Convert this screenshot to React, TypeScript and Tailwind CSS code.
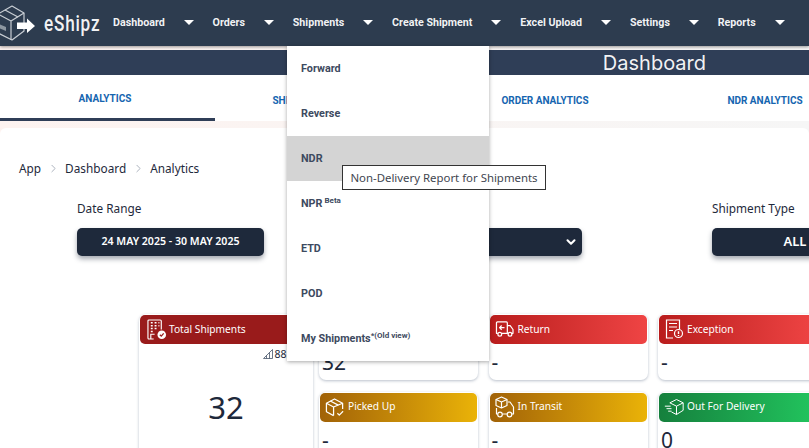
import { ChevronRight, ChevronDown } from 'lucide-react';
import type { ReactNode } from 'react';

const navItems = ['Dashboard', 'Orders', 'Shipments', 'Create Shipment', 'Excel Upload', 'Settings', 'Reports'];
const tabs = ['ANALYTICS', 'SHIPMENT ANALYTICS', 'ORDER ANALYTICS', 'NDR ANALYTICS'];
const menuItems: { label: string; sup?: string }[] = [
  { label: 'Forward' },
  { label: 'Reverse' },
  { label: 'NDR' },
  { label: 'NPR', sup: ' Beta' },
  { label: 'ETD' },
  { label: 'POD' },
  { label: 'My Shipments', sup: '*(Old view)' },
];

function Logo() {
  return (
    <svg width="44" height="46" viewBox="0 0 44 46" fill="none" className="shrink-0">
      <g stroke="#c9ced4" strokeWidth="1.2" strokeLinejoin="round">
        <path d="M-2 14 L12 6 L24 13 L24 31 L12 40 L-2 33 Z" />
        <path d="M-2 14 L11 21 L24 13 M11 21 V40" />
        <path d="M5 10 L18 17" />
      </g>
      <path d="M-1 24 L6 27 V31 L-1 28 Z" fill="#8c96a0" />
      <path d="M17 22.5 H27 V18.5 L35 26 L27 33 V29 H17 Z" fill="#fff" />
    </svg>
  );
}

function IconBuilding() {
  return (
    <svg width="20" height="21" viewBox="0 0 21 22" fill="none" stroke="#fff" strokeWidth="1.2">
      <path d="M7 21 H2 a1 1 0 0 1 -1 -1 V2 a1 1 0 0 1 1 -1 H14 a1 1 0 0 1 1 1 V11" />
      <path d="M4 4h2M8 4h2M12 4h1M4 7h2M8 7h2M12 7h1M4 10h2M8 10h2M4 13h2" strokeWidth="1.6" />
      <path d="M4 21 V16 H8" />
      <circle cx="15.5" cy="16.5" r="4.5" fill="#fff" stroke="none" />
      <path d="M13.5 16.5 L15 18 L17.5 15" stroke="#991b1b" strokeWidth="1.3" />
    </svg>
  );
}

function IconReturn() {
  return (
    <svg width="19" height="17" viewBox="0 0 20 18" fill="none" stroke="#fff" strokeWidth="1.3" strokeLinejoin="round">
      <path d="M3 13 H1.5 V2 a1 1 0 0 1 1 -1 H12 a1 1 0 0 1 1 1 V13 H7" />
      <path d="M13 5 H16 L19 9 V13 H17.5 M13 13 H14" />
      <circle cx="5" cy="14" r="2" />
      <circle cx="15.8" cy="14" r="2" />
      <path d="M10 7 H5 M7 4.8 L4.8 7 L7 9.2" strokeWidth="1.4" />
    </svg>
  );
}

function IconException() {
  return (
    <svg width="19" height="21" viewBox="0 0 19 21" fill="none" stroke="#fff" strokeWidth="1.2">
      <path d="M8 19 H1.5 V1 H14.5 V10" />
      <path d="M4 4.5 H12 M4 8 H12 M4 11.5 H8" strokeWidth="1.2" />
      <circle cx="13.5" cy="14.5" r="4" />
      <path d="M13.5 12.3 V15 M13.5 16 V16.9" strokeWidth="1.4" />
    </svg>
  );
}

function IconPicked() {
  return (
    <svg width="21" height="21" viewBox="0 0 21 21" fill="none" stroke="#fff" strokeWidth="1.3" strokeLinejoin="round">
      <path d="M9 19 L1.5 15 V6 L10 1.5 L18.5 6 V12" />
      <path d="M1.5 6 L9 10 L18.5 6 M9 10 V19" />
      <path d="M5.5 3.7 L14 8" />
      <path d="M13 16.5 L15 18.5 L19 14.5" />
    </svg>
  );
}

function IconTransit() {
  return (
    <svg width="20" height="22" viewBox="0 0 20 22" fill="none" stroke="#fff" strokeWidth="1.2" strokeLinejoin="round">
      <path d="M6.5 1 L12 3.5 V9.5 L6.5 12 L1 9.5 V3.5 Z" />
      <path d="M1 3.5 L6.5 6 L12 3.5 M6.5 6 V12" />
      <path d="M13 6 H15 L18.5 11 V18 H17" />
      <path d="M1.5 12 V18 H2.5 M7.5 18 H12" />
      <circle cx="5" cy="18.5" r="2.3" />
      <circle cx="14.5" cy="18.5" r="2.3" />
    </svg>
  );
}

function IconDelivery() {
  return (
    <svg width="24" height="20" viewBox="0 0 24 20" fill="none" stroke="#fff" strokeWidth="1.2" strokeLinejoin="round">
      <path d="M7 5 L15 1 L23 5 V14 L15 19 L9 16" />
      <path d="M7 5 L15 9 L23 5 M15 9 V19" />
      <path d="M1 9 H8 M3 12 H9 M5 15 H9" />
    </svg>
  );
}

function Card({ title, icon, value, head }: { title: string; icon: ReactNode; value: string; head: string }) {
  return (
    <div className="w-[159px] shrink-0 rounded-[7px] bg-white p-px shadow-[0_1px_3px_rgba(100,116,139,0.45)]">
      <div className={`flex h-[29px] items-center gap-[3px] rounded-[5px] pl-[5px] text-[10.2px] text-white ${head}`}>
        <span className="flex w-[20px] justify-center">{icon}</span>
        <span>{title}</span>
      </div>
      <div className="h-[35px] pl-[2px] pt-[1px] text-[21px] leading-[35px] text-[#1e293b]">{value}</div>
    </div>
  );
}

export default function App() {
  return (
    <div className="relative h-[448px] w-[809px] overflow-hidden bg-linear-to-r from-[#fdf3f0] to-[#f6f6f6] font-['Noto_Sans',sans-serif]">
      {/* Top nav */}
      <div className="flex h-[46px] items-center bg-[#2d3c4f] shadow-[0_1px_3px_rgba(0,0,0,0.4)]">
        <div className="flex w-[113px] shrink-0 items-center">
          <Logo />
          <span className="w-[56px] origin-left scale-x-[0.78] whitespace-nowrap font-['Roboto',sans-serif] text-[22px] font-medium tracking-[1px] text-white/95">eShipz</span>
        </div>
        <div className="flex font-['Roboto',sans-serif] text-[10.7px] font-bold text-white/95">
          {navItems.map((item) => (
            <div key={item} className="flex items-center gap-[19px] pr-[18.8px]">
              <span>{item}</span>
              <span className="h-0 w-0 border-x-[5.5px] border-t-[5px] border-x-transparent border-t-white" />
            </div>
          ))}
        </div>
      </div>

      {/* Title bar */}
      <div className="mt-[4px] flex h-[25px] items-center justify-end bg-[#2f3e57] pr-[103px] font-['Inter',sans-serif] text-[20px] text-white/95">
        Dashboard
      </div>

      {/* Tabs */}
      <div className="flex h-[46px] w-[880px] gap-[5px] bg-white font-['Roboto',sans-serif] text-[10px] font-bold text-[#1565b0]">
        {tabs.map((tab, i) => (
          <div key={tab} className={`flex w-[215px] items-center justify-center pr-[5px] pt-[4px] ${i === 0 ? 'border-b-[3px] border-[#2f3e57]' : ''}`}>
            {tab}
          </div>
        ))}
      </div>

      {/* Content */}
      <div className="mt-[7px] h-[320px] rounded-t-[6px] bg-white">
        <div className="flex items-center gap-[5.5px] pl-[19px] pt-[31px] text-[11.8px] leading-[18px] text-[#1e293b]">
          <span>App</span>
          <ChevronRight className="h-[13px] w-[13px] text-gray-400" strokeWidth={1.5} />
          <span>Dashboard</span>
          <ChevronRight className="h-[13px] w-[13px] text-gray-400" strokeWidth={1.5} />
          <span>Analytics</span>
        </div>

        <div className="mt-[22px] flex gap-[130.5px] pl-[77px]">
          <div className="w-[187px] shrink-0">
            <div className="text-[11.8px] leading-[18px] text-[#1e293b]">Date Range</div>
            <div className="mt-[11px] flex h-[28px] items-center justify-center rounded-[5px] bg-[#1e293b] text-[10.6px] font-semibold text-white shadow-[0_3px_5px_rgba(30,41,59,0.4)]">
              24 MAY 2025 - 30 MAY 2025
            </div>
          </div>
          <div className="w-[187px] shrink-0">
            <div className="text-[11.8px] leading-[18px] text-[#1e293b]">Courier</div>
            <div className="relative mt-[11px] flex h-[28px] items-center justify-center rounded-[5px] bg-[#1e293b] pr-[21px] text-[13px] font-semibold text-white shadow-[0_3px_5px_rgba(30,41,59,0.4)]">
              ALL
              <ChevronDown className="absolute right-[4px] h-[14px] w-[14px]" strokeWidth={3.5} />
            </div>
          </div>
          <div className="w-[187px] shrink-0">
            <div className="text-[11.8px] leading-[18px] text-[#1e293b]">Shipment Type</div>
            <div className="mt-[11px] flex h-[28px] items-center justify-center rounded-[5px] bg-[#1e293b] pr-[21px] text-[13px] font-semibold text-white shadow-[0_3px_5px_rgba(30,41,59,0.4)]">
              ALL
            </div>
          </div>
        </div>

        {/* Cards */}
        <div className="mt-[58px] flex gap-[6px] pl-[139px]">
          <div className="h-[200px] w-[174px] shrink-0 rounded-[7px] bg-white p-px shadow-[0_1px_3px_rgba(100,116,139,0.45)]">
            <div className="flex h-[29px] items-center gap-[2px] rounded-[5px] bg-[#991b1b] pl-[7px] text-[10.2px] text-white">
              <IconBuilding />
              <span>Total Shipments</span>
            </div>
            <div className="flex items-center justify-end gap-[1px] pr-[2px] pt-[3px] text-[10.5px] leading-[14px] text-[#1e293b]">
              <svg width="10" height="10" viewBox="0 0 10 10" fill="none" stroke="#475569" strokeWidth="0.8">
                <path d="M0.5 9.5 L9.5 0.5 V9.5 Z" />
                <path d="M3.5 9.5 V6.5 M6.5 9.5 V3.5" />
              </svg>
              <span>88.24%</span>
            </div>
            <div className="mt-[24px] text-center text-[31px] leading-[44px] text-[#1e293b]">32</div>
          </div>
          <div className="flex w-[520px] shrink-0 flex-wrap content-start gap-x-[10.5px] gap-y-[11.5px]">
            <Card title="Delivered" icon={null} value="32" head="bg-linear-to-r from-[#15803d] to-[#22c55e]" />
            <Card title="Return" icon={<IconReturn />} value="-" head="bg-linear-to-r from-[#b91c1c] to-[#ef4444]" />
            <Card title="Exception" icon={<IconException />} value="-" head="bg-linear-to-r from-[#b91c1c] to-[#ef4444]" />
            <Card title="Picked Up" icon={<IconPicked />} value="-" head="bg-linear-to-r from-[#a16207] to-[#eab308]" />
            <Card title="In Transit" icon={<IconTransit />} value="-" head="bg-linear-to-r from-[#a16207] to-[#eab308]" />
            <Card title="Out For Delivery" icon={<IconDelivery />} value="0" head="bg-linear-to-r from-[#15803d] to-[#22c55e]" />
          </div>
        </div>
      </div>

      {/* Shipments dropdown */}
      <div className="absolute left-[287px] top-[46px] w-[202px] bg-white font-['Roboto',sans-serif] text-[10.8px] font-bold text-[#3d4a60] shadow-[0_1px_4px_rgba(0,0,0,0.35)]">
        {menuItems.map((item) => (
          <div key={item.label} className={`flex h-[45px] items-center pl-[14px] pt-[1px] ${item.label === 'NDR' ? 'bg-[#d4d4d4]' : ''}`}>
            <span>
              {item.label}
              {item.sup && <sup className="text-[8px]">{item.sup}</sup>}
            </span>
          </div>
        ))}
      </div>

      {/* Tooltip */}
      <div className="absolute left-[342px] top-[165px] flex h-[25px] w-[204px] items-center justify-center border border-[#333] bg-white text-[11.4px] text-[#3f4650]">
        Non-Delivery Report for Shipments
      </div>
    </div>
  );
}
